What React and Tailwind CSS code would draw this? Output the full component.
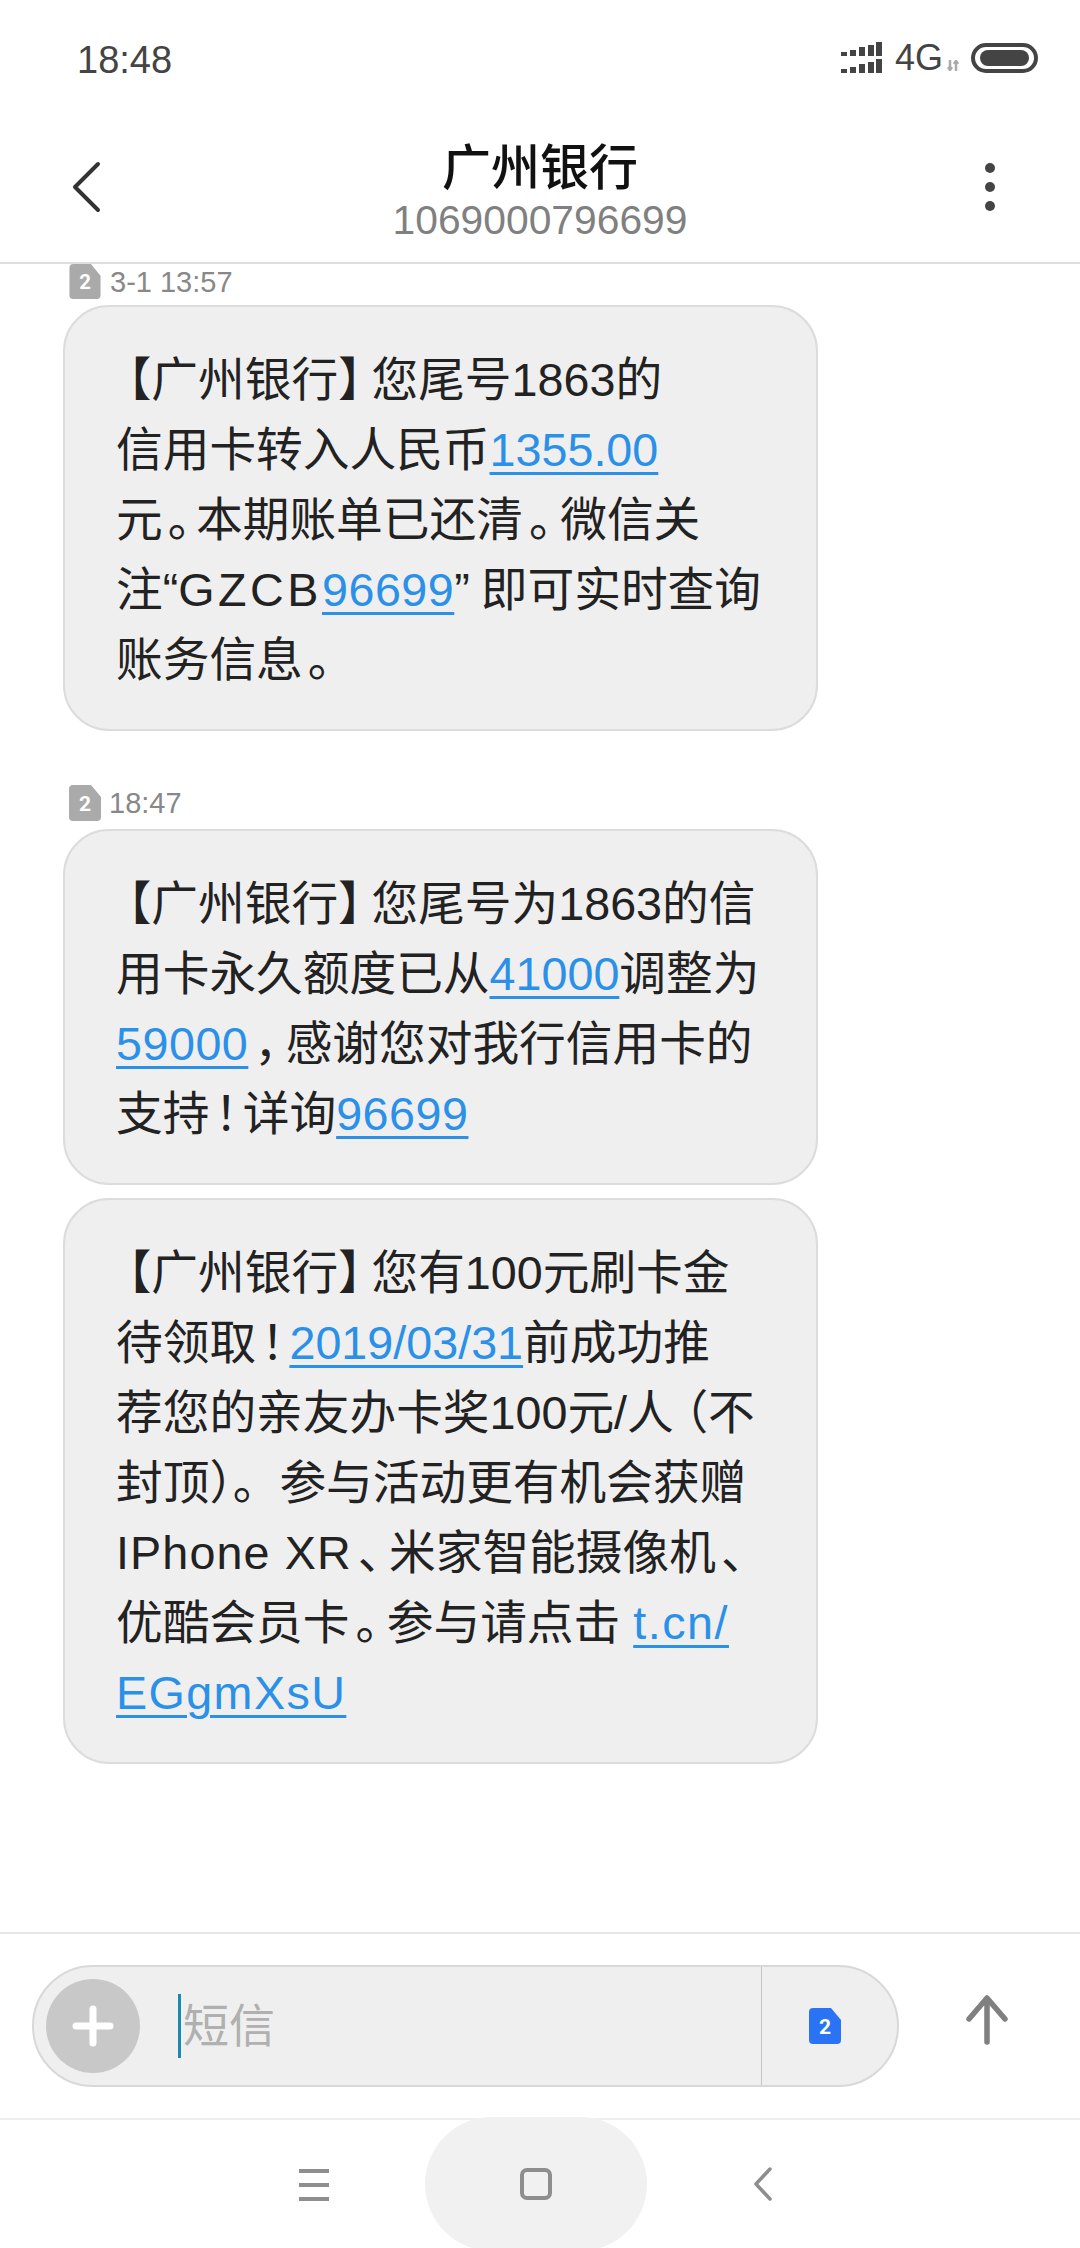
import React from "react";

const FONT = { fontFamily: '"Liberation Sans", "Noto Sans CJK SC", sans-serif' };

// Каждая строка задана явно, чтобы переносы совпадали со снимком
const L = ({ children }) => (
  <span className="text-[#2b90e8] underline decoration-[3px] underline-offset-[6px]">{children}</span>
);
const LW = ({ children }) => (
  <span className="text-[#2b90e8] tracking-[0.5px] underline decoration-[3px] underline-offset-[6px]">{children}</span>
);

// Узкая пунктуация: на снимке знаки препинания занимают меньше полной ширины
const Open = () => <span className='ml-[12px] [font-feature-settings:"halt"]'>【</span>;
const Close = () => <span className='mr-[10px] [font-feature-settings:"halt"]'>】</span>;
const Paren = () => <span className='ml-[11px] [font-feature-settings:"halt"]'>（</span>;
const P = ({ children }) => <span className='ml-[5px] mr-[5px] [font-feature-settings:"halt"]'>{children}</span>;
const PW = ({ children }) => <span className='ml-[6px] mr-[8px] [font-feature-settings:"halt"]'>{children}</span>;
const Title = () => <><Open />广州银行<Close /></>;

const messages = [
  {
    time: "3-1 13:57",
    lines: [
      [<Title key="t" />, "您尾号1863的"],
      ["信用卡转入人民币", <L key="a">1355.00</L>],
      ["元", <P key="p">。</P>, "本期账单已还清", <PW key="q">。</PW>, "微信关"],
      ["注“", <span key="g" className="tracking-[3.5px]">GZCB</span>, <LW key="b">96699</LW>, <span key="c" className="mr-[11px]">”</span>, "即可实时查询"],
      ["账务信息", <P key="p">。</P>],
    ],
  },
  {
    time: "18:47",
    lines: [
      [<Title key="t" />, "您尾号为1863的信"],
      ["用卡永久额度已从", <L key="a">41000</L>, "调整为"],
      [<LW key="b">59000</LW>, <PW key="p">，</PW>, "感谢您对我行信用卡的"],
      ["支持", <P key="p">！</P>, "详询", <LW key="c">96699</LW>],
    ],
  },
  {
    lines: [
      [<Title key="t" />, "您有100元刷卡金"],
      ["待领取", <P key="p">！</P>, <L key="a">2019/03/31</L>, "前成功推"],
      ["荐您的亲友办卡奖100元/人", <Paren key="p" />, "不"],
      ["封顶）。参与活动更有机会获赠"],
      [<span key="i" className="tracking-[1.1px]">IPhone XR</span>, <PW key="p">、</PW>, "米家智能摄像机", <P key="q">、</P>],
      ["优酷会员卡", <PW key="p">。</PW>, "参与请点击 ", <L key="b"><span className="tracking-[1.5px]">t.cn/</span></L>],
      [<L key="c"><span className="tracking-[1.4px]">EGgmXsU</span></L>],
    ],
  },
];

function SimIcon({ className, fill }) {
  return (
    <svg viewBox="0 0 32 36" className={className}>
      <path d="M4 0H22L32 12V32a4 4 0 0 1-4 4H4a4 4 0 0 1-4-4V4a4 4 0 0 1 4-4Z" fill={fill} />
      <text x="16" y="26" textAnchor="middle" fontSize="21" fontWeight="700" fill="#fff" fontFamily="Roboto, sans-serif">2</text>
    </svg>
  );
}

function SignalIcon() {
  const xs = [0, 9, 18, 27, 35];
  const hs = [4, 6, 9, 11, 14];
  return (
    <svg width="41" height="32" viewBox="0 0 41 32" fill="#444">
      {xs.map((x, i) => (
        <g key={i}>
          <rect x={x} y={14 - hs[i]} width="6" height={hs[i]} />
          <rect x={x} y={31 - hs[i]} width="6" height={hs[i]} />
        </g>
      ))}
    </svg>
  );
}

function Bubble({ lines }) {
  return (
    <div className="w-[755px] rounded-[46px] border-2 border-[#dcdcdc] bg-[#efefef] pb-[34px] pl-[51px] pt-[38px] text-[46.7px] leading-[70px] text-[#222]">
      {lines.map((segs, i) => (
        <div key={i} className="whitespace-nowrap">{segs}</div>
      ))}
    </div>
  );
}

export default function App() {
  return (
    <div className="flex h-[2248px] w-[1080px] flex-col overflow-hidden bg-white" style={FONT}>
      {/* статусбар */}
      <div className="flex h-[118px] items-start justify-between pl-[77px] pr-[42px] pt-[36px]">
        <div className="text-[38px] leading-[48px] text-[#444]">18:48</div>
        <div className="flex items-center pt-[6px]">
          <SignalIcon />
          <span className="ml-[13px] text-[36px] leading-[32px] text-[#444]">4G</span>
          <svg width="13" height="11" viewBox="0 0 13 11" className="ml-[4px] mt-[14px]" fill="none" stroke="#aaa" strokeWidth="2.5">
            <path d="M3 0V9M1 7l2 3 2-3M9 11V2M7 4l2-3 2 3" />
          </svg>
          <div className="ml-[11px] flex h-[30px] w-[67px] items-center rounded-full border-[4px] border-[#444] px-[5px]">
            <div className="h-[16px] w-full rounded-full bg-[#444]" />
          </div>
        </div>
      </div>

      {/* заголовок */}
      <div className="relative flex h-[146px] flex-col items-center border-b-2 border-[#dedede]">
        <svg width="30" height="52" viewBox="0 0 30 52" fill="none" stroke="#333" strokeWidth="4" strokeLinecap="round" strokeLinejoin="round" className="absolute left-[72px] top-[43px]">
          <path d="M26 3 3 26l23 23" />
        </svg>
        <div className="mt-[20px] text-[49px] font-medium leading-[60px] text-[#111]">广州银行</div>
        <div className="mt-[-3px] text-[40.8px] leading-[50px] text-[#808080]">1069000796699</div>
        <div className="absolute left-[985px] top-[45px] flex flex-col gap-[9px]">
          <div className="h-[10px] w-[10px] rounded-full bg-[#444]" />
          <div className="h-[10px] w-[10px] rounded-full bg-[#444]" />
          <div className="h-[10px] w-[10px] rounded-full bg-[#444]" />
        </div>
      </div>

      {/* сообщения */}
      <div className="flex min-h-0 flex-1 flex-col pl-[63px]">
        <div className="ml-[6px] flex h-[41px] items-start">
          <SimIcon className="h-[35px] w-[32px]" fill="#aaaaaa" />
          <span className="ml-[9px] mt-[1px] text-[29px] leading-[34px] text-[#888]">{messages[0].time}</span>
        </div>
        <Bubble lines={messages[0].lines} />
        <div className="ml-[6px] mt-[54px] flex h-[44px] items-start">
          <SimIcon className="h-[36px] w-[32px]" fill="#aaaaaa" />
          <span className="ml-[8px] mt-[1px] text-[29px] leading-[34px] text-[#888]">{messages[1].time}</span>
        </div>
        <Bubble lines={messages[1].lines} />
        <div className="h-[13px]" />
        <Bubble lines={messages[2].lines} />
      </div>

      {/* поле ввода */}
      <div className="flex h-[186px] items-center border-t-2 border-[#e6e6e6] pl-[32px]">
        <div className="flex h-[122px] w-[867px] items-center rounded-full border-2 border-[#d8d8d8] bg-[#efefef]">
          <div className="ml-[12px] flex h-[94px] w-[94px] items-center justify-center rounded-full bg-[#c8c8c8]">
            <svg width="42" height="42" viewBox="0 0 42 42" fill="none" stroke="#fff" strokeWidth="7" strokeLinecap="round">
              <path d="M21 4V38M4 21H38" />
            </svg>
          </div>
          <div className="ml-[38px] h-[64px] w-[3px] bg-[#1a8bb0]" />
          <span className="ml-[2px] text-[46px] leading-[64px] text-[#b0b0b0]">短信</span>
          <div className="ml-auto flex h-full w-[136px] items-center justify-start border-l border-[#c4c4c4] pl-[47px]">
            <SimIcon className="h-[36px] w-[32px]" fill="#2b73f5" />
          </div>
        </div>
        <svg width="44" height="50" viewBox="0 0 44 50" fill="none" stroke="#808080" strokeWidth="5.5" strokeLinecap="round" strokeLinejoin="round" className="ml-[66px] mt-[-12px]">
          <path d="M22 47V4M4 24 22 3l18 21" />
        </svg>
      </div>

      {/* навигация */}
      <div className="flex h-[130px] items-start justify-center border-t-2 border-[#eeeeee] pr-[9px]">
        <div className="mr-[96px] mt-[49px] flex w-[30px] flex-col gap-[10px]">
          <div className="h-[4px] bg-[#8e8e8e]" />
          <div className="h-[4px] bg-[#8e8e8e]" />
          <div className="h-[4px] bg-[#8e8e8e]" />
        </div>
        <div className="mt-[-3px] flex h-[134px] w-[222px] shrink-0 items-center justify-center rounded-[70px] bg-[#f1f1f1]">
          <div className="h-[32px] w-[32px] rounded-[7px] border-[4px] border-[#8e8e8e]" />
        </div>
        <svg width="20" height="34" viewBox="0 0 20 34" fill="none" stroke="#8e8e8e" strokeWidth="3.5" strokeLinecap="round" strokeLinejoin="round" className="ml-[106px] mt-[47px]">
          <path d="M17 2 3 17l14 15" />
        </svg>
      </div>
    </div>
  );
}
